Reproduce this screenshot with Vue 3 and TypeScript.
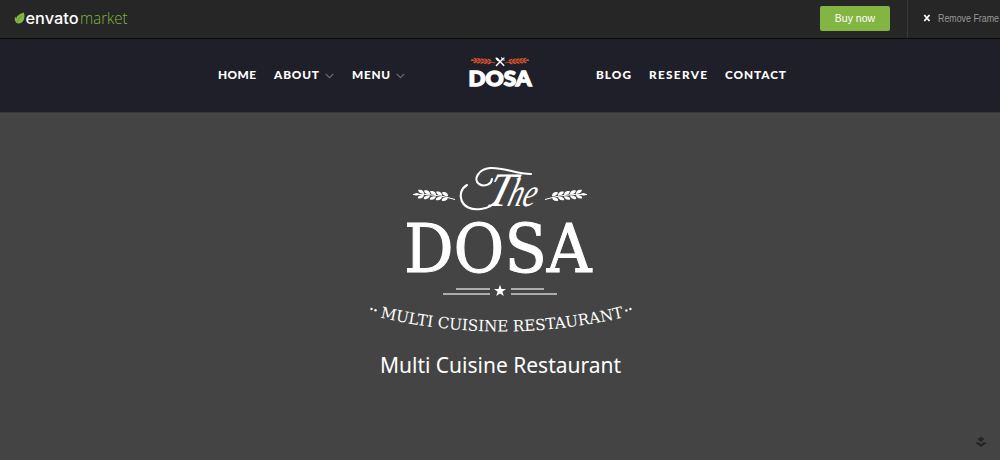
<script setup lang="ts">
interface NavItem { label: string; width: number; menu?: boolean }
const leftNav: NavItem[] = [
  { label: 'HOME', width: 38 },
  { label: 'ABOUT', width: 45, menu: true },
  { label: 'MENU', width: 38, menu: true },
]
const rightNav: NavItem[] = [
  { label: 'BLOG', width: 35 },
  { label: 'RESERVE', width: 58 },
  { label: 'CONTACT', width: 61 },
]
const leaves = [9, 15, 21, 27, 33]
</script>

<template>
  <div class="page">
    <header class="frame-bar">
      <a class="brand">
        <svg width="120" height="28" viewBox="0 0 120 28">
          <path d="M9.8 3.4C10.9 5.6 10.8 10.2 8.8 12.6C7 15 3.3 15.2 1.9 13.2C.4 11 .4 9 1.4 7.4C1.7 8.2 1.9 9 2.3 9.6C2.6 6.4 5.8 4.7 9.8 3.4Z" fill="#82b541" />
          <path d="M3.2 13Q4.5 9.4 7.4 6.8" fill="none" stroke="#587d2d" stroke-width=".6" />
          <text class="brand-main" x="11.5" y="14.5" textLength="53" lengthAdjust="spacingAndGlyphs">envato</text>
          <text class="brand-sub" x="66" y="14.5" textLength="47.5" lengthAdjust="spacingAndGlyphs">market</text>
        </svg>
      </a>
      <div class="frame-actions">
        <button class="buy">Buy now</button>
        <div class="remove">
          <svg width="8" height="8" viewBox="0 0 8 8"><path d="M1.3 1L6.5 7M6.5 1L1.3 7" stroke="#fff" stroke-width="1.8" /></svg>
          <svg width="62" height="14"><text x="0" y="10.5" textLength="61" lengthAdjust="spacingAndGlyphs">Remove Frame</text></svg>
        </div>
      </div>
    </header>

    <nav class="nav">
      <ul class="links left">
        <li v-for="item in leftNav" :key="item.label">
          <svg :width="item.width" height="16"><text x="0" y="12" :textLength="item.width">{{ item.label }}</text></svg>
          <svg v-if="item.menu" class="chevron" width="9" height="6" viewBox="0 0 9 6"><path d="M.7 .8L4.5 4.6L8.3 .8" fill="none" stroke="#6f6f78" stroke-width="1.1" /></svg>
        </li>
      </ul>
      <svg class="logo" width="66" height="34" viewBox="0 0 66 34">
        <defs>
          <g id="small-wheat" fill="#d2512b">
            <path d="M0 4.3Q11 4.3 24 6.8" fill="none" stroke="#d2512b" stroke-width=".8" />
            <g v-for="x in [5, 8.5, 12, 15.5, 19]" :key="x" :transform="`translate(${x} ${4 + x * .08})`">
              <path d="M1.5 0C0-.3-2.2-.6-2.5-2.7C-.2-2.9 1.5-1.5 1.5 0Z" />
              <path d="M1.5 .6C-.4 .5-2.5 1-2.7 2.7C-.5 3.1 1.2 2 1.5 .6Z" />
            </g>
            <ellipse cx="1.5" cy="4.2" rx="1.5" ry=".9" />
          </g>
        </defs>
        <use href="#small-wheat" transform="translate(4 0)" />
        <use href="#small-wheat" transform="translate(62 0) scale(-1 1)" />
        <path d="M29.5 2L37.2 9.8M36.6 2L29 10" stroke="#fff" stroke-width="1.4" />
        <path d="M28.5 1.8C29 1 31.5 2 32.5 4L31.6 5.4C29.8 4.8 28.4 3 28.5 1.8M34.2 1.3L34.8 4.2L37.7 4.5L38 3.7L35.8 3.4L37.8 1.9L37.2 1.3L35.3 3L35 1Z" fill="#fff" />
        <text x="1.5" y="30" textLength="63" lengthAdjust="spacingAndGlyphs">DOSA</text>
      </svg>
      <ul class="links right">
        <li v-for="item in rightNav" :key="item.label">
          <svg :width="item.width" height="16"><text x="0" y="12" :textLength="item.width">{{ item.label }}</text></svg>
        </li>
      </ul>
    </nav>

    <main class="hero">
      <svg class="emblem" width="280" height="180" viewBox="360 160 280 180">
        <defs>
          <g id="wheat" fill="#fff">
            <path d="M0 4Q23 3 42 9" fill="none" stroke="#fff" stroke-width="1" />
            <path d="M0 4Q4 .9 7 4Q3 6 0 4Z" />
            <g v-for="(x, i) in leaves" :key="x" :transform="`translate(${x} ${3.5 + i * .6})`">
              <path d="M2 0C-1-.3-4-1.3-3.8-4.2C0-4.8 2.3-2.7 2 0Z" />
              <path d="M2 1C-1 .7-4.5 1.6-4.1 4.3C-.8 5.2 1.5 3.6 2 1Z" />
            </g>
          </g>
          <path id="ribbon-line" d="M380 317.5Q501 345.5 623 317.5" />
        </defs>
        <use href="#wheat" transform="translate(413 190.5)" />
        <use href="#wheat" transform="translate(587 190.5) scale(-1 1)" />
        <g transform="translate(484 206) skewX(-16)">
          <text class="script" x="0" y="0"><tspan textLength="26" lengthAdjust="spacingAndGlyphs">T</tspan><tspan class="script-low" x="22" textLength="28" lengthAdjust="spacingAndGlyphs">he</tspan></text>
        </g>
        <g class="swash">
          <path d="M531 174C516 174 503 167 490 168C478 169 473 180 479 184C484 187 491 185 492 179" />
          <path d="M467 185C455 192 460 212 481 209C489 208 494 205 498 199" />
        </g>
        <text class="title" x="404" y="272.3" textLength="187.5" lengthAdjust="spacingAndGlyphs">DOSA</text>
        <path d="M456 289H490M443 294H490M511 289H544M511 294H557" stroke="#d0d0d0" stroke-width="1.5" />
        <path d="M500 284.7L501.5 289H506L502.4 291.7L503.8 296L500 293.4L496.2 296L497.6 291.7L494 289H498.5Z" fill="#fff" />
        <g fill="#fff"><circle cx="371.5" cy="309" r="1.2" /><circle cx="375.5" cy="310.3" r="1.2" /><circle cx="626.4" cy="310.5" r="1.2" /><circle cx="630.4" cy="309" r="1.2" /></g>
        <text class="ribbon"><textPath href="#ribbon-line" textLength="246" lengthAdjust="spacingAndGlyphs">MULTI CUISINE RESTAURANT</textPath></text>
      </svg>
      <svg class="tagline" width="244" height="36"><text x="2" y="26" textLength="241" lengthAdjust="spacingAndGlyphs">Multi Cuisine Restaurant</text></svg>
      <svg class="to-top" width="14" height="12" viewBox="0 0 14 12">
        <path d="M3.5 3L7 .8L10.5 3L7 6ZM1.5 7L4 6L7 8L10 6L12.5 7L7 11Z" fill="#252525" />
      </svg>
    </main>
  </div>
</template>

<style>
body { margin: 0; overflow: hidden; }
</style>
<style scoped>
.page { width: 1000px; height: 460px; display: flex; flex-direction: column; background: #444; }
svg { display: block; flex: none; overflow: visible; }
.frame-bar { height: 39px; box-sizing: border-box; display: flex; justify-content: space-between; background: #262626; border-bottom: 1px solid #0c0c0c; }
.brand { padding: 9px 0 0 14px; }
.brand-main { font: 500 16px Inter, sans-serif; fill: #fff; }
.brand-sub { font: 300 16px "Open Sans", sans-serif; fill: #82b541; }
.frame-actions { display: flex; }
.buy { width: 70px; height: 25px; margin: 6px 17px 0 0; padding: 0 0 2px; border: 0; border-radius: 2px; background: #82b541; color: #fff; font: 10.5px "Liberation Sans", sans-serif; }
.remove { width: 93px; height: 38px; box-sizing: border-box; border-left: 1px solid #3b3b3b; padding: 0 0 3px 15px; display: flex; align-items: center; gap: 7px; }
.remove text { font: 10px "Liberation Sans", sans-serif; fill: #999; }
.nav { height: 74px; box-sizing: border-box; flex: none; display: flex; background: #1f1f29; border-bottom: 1px solid #383839; }
.links { display: flex; gap: 18px; margin: 0; padding: 28px 0 0; list-style: none; }
.links li { display: flex; height: 16px; }
.links text { font: 900 11.8px Lato, sans-serif; fill: #fff; }
.left { width: 249px; padding-left: 218px; }
.chevron { margin: 6px 0 0 6px; }
.logo { margin-top: 17px; }
.logo text { font: 900 20px Lato, sans-serif; fill: #fff; stroke: #fff; stroke-width: 1.3; }
.right { padding-left: 62.5px; }
.hero { position: relative; flex: 1; display: flex; flex-direction: column; align-items: center; padding-top: 47px; }
.script { font: italic 48px "Liberation Serif", serif; fill: #fff; }
.script-low { font-size: 40px; }
.swash { fill: none; stroke: #fff; stroke-width: 2.1; stroke-linecap: round; }
.title { font: 67px "DejaVu Serif Condensed", "DejaVu Serif", serif; fill: #fff; stroke: #fff; stroke-width: .9; }
.ribbon { font: 15.5px "DejaVu Serif Condensed", "DejaVu Serif", serif; fill: #fff; }
.tagline { margin-top: 7px; }
.tagline text { font: 22.5px "Noto Sans", sans-serif; fill: #fff; }
.to-top { position: absolute; right: 12px; bottom: 12px; }
</style>
